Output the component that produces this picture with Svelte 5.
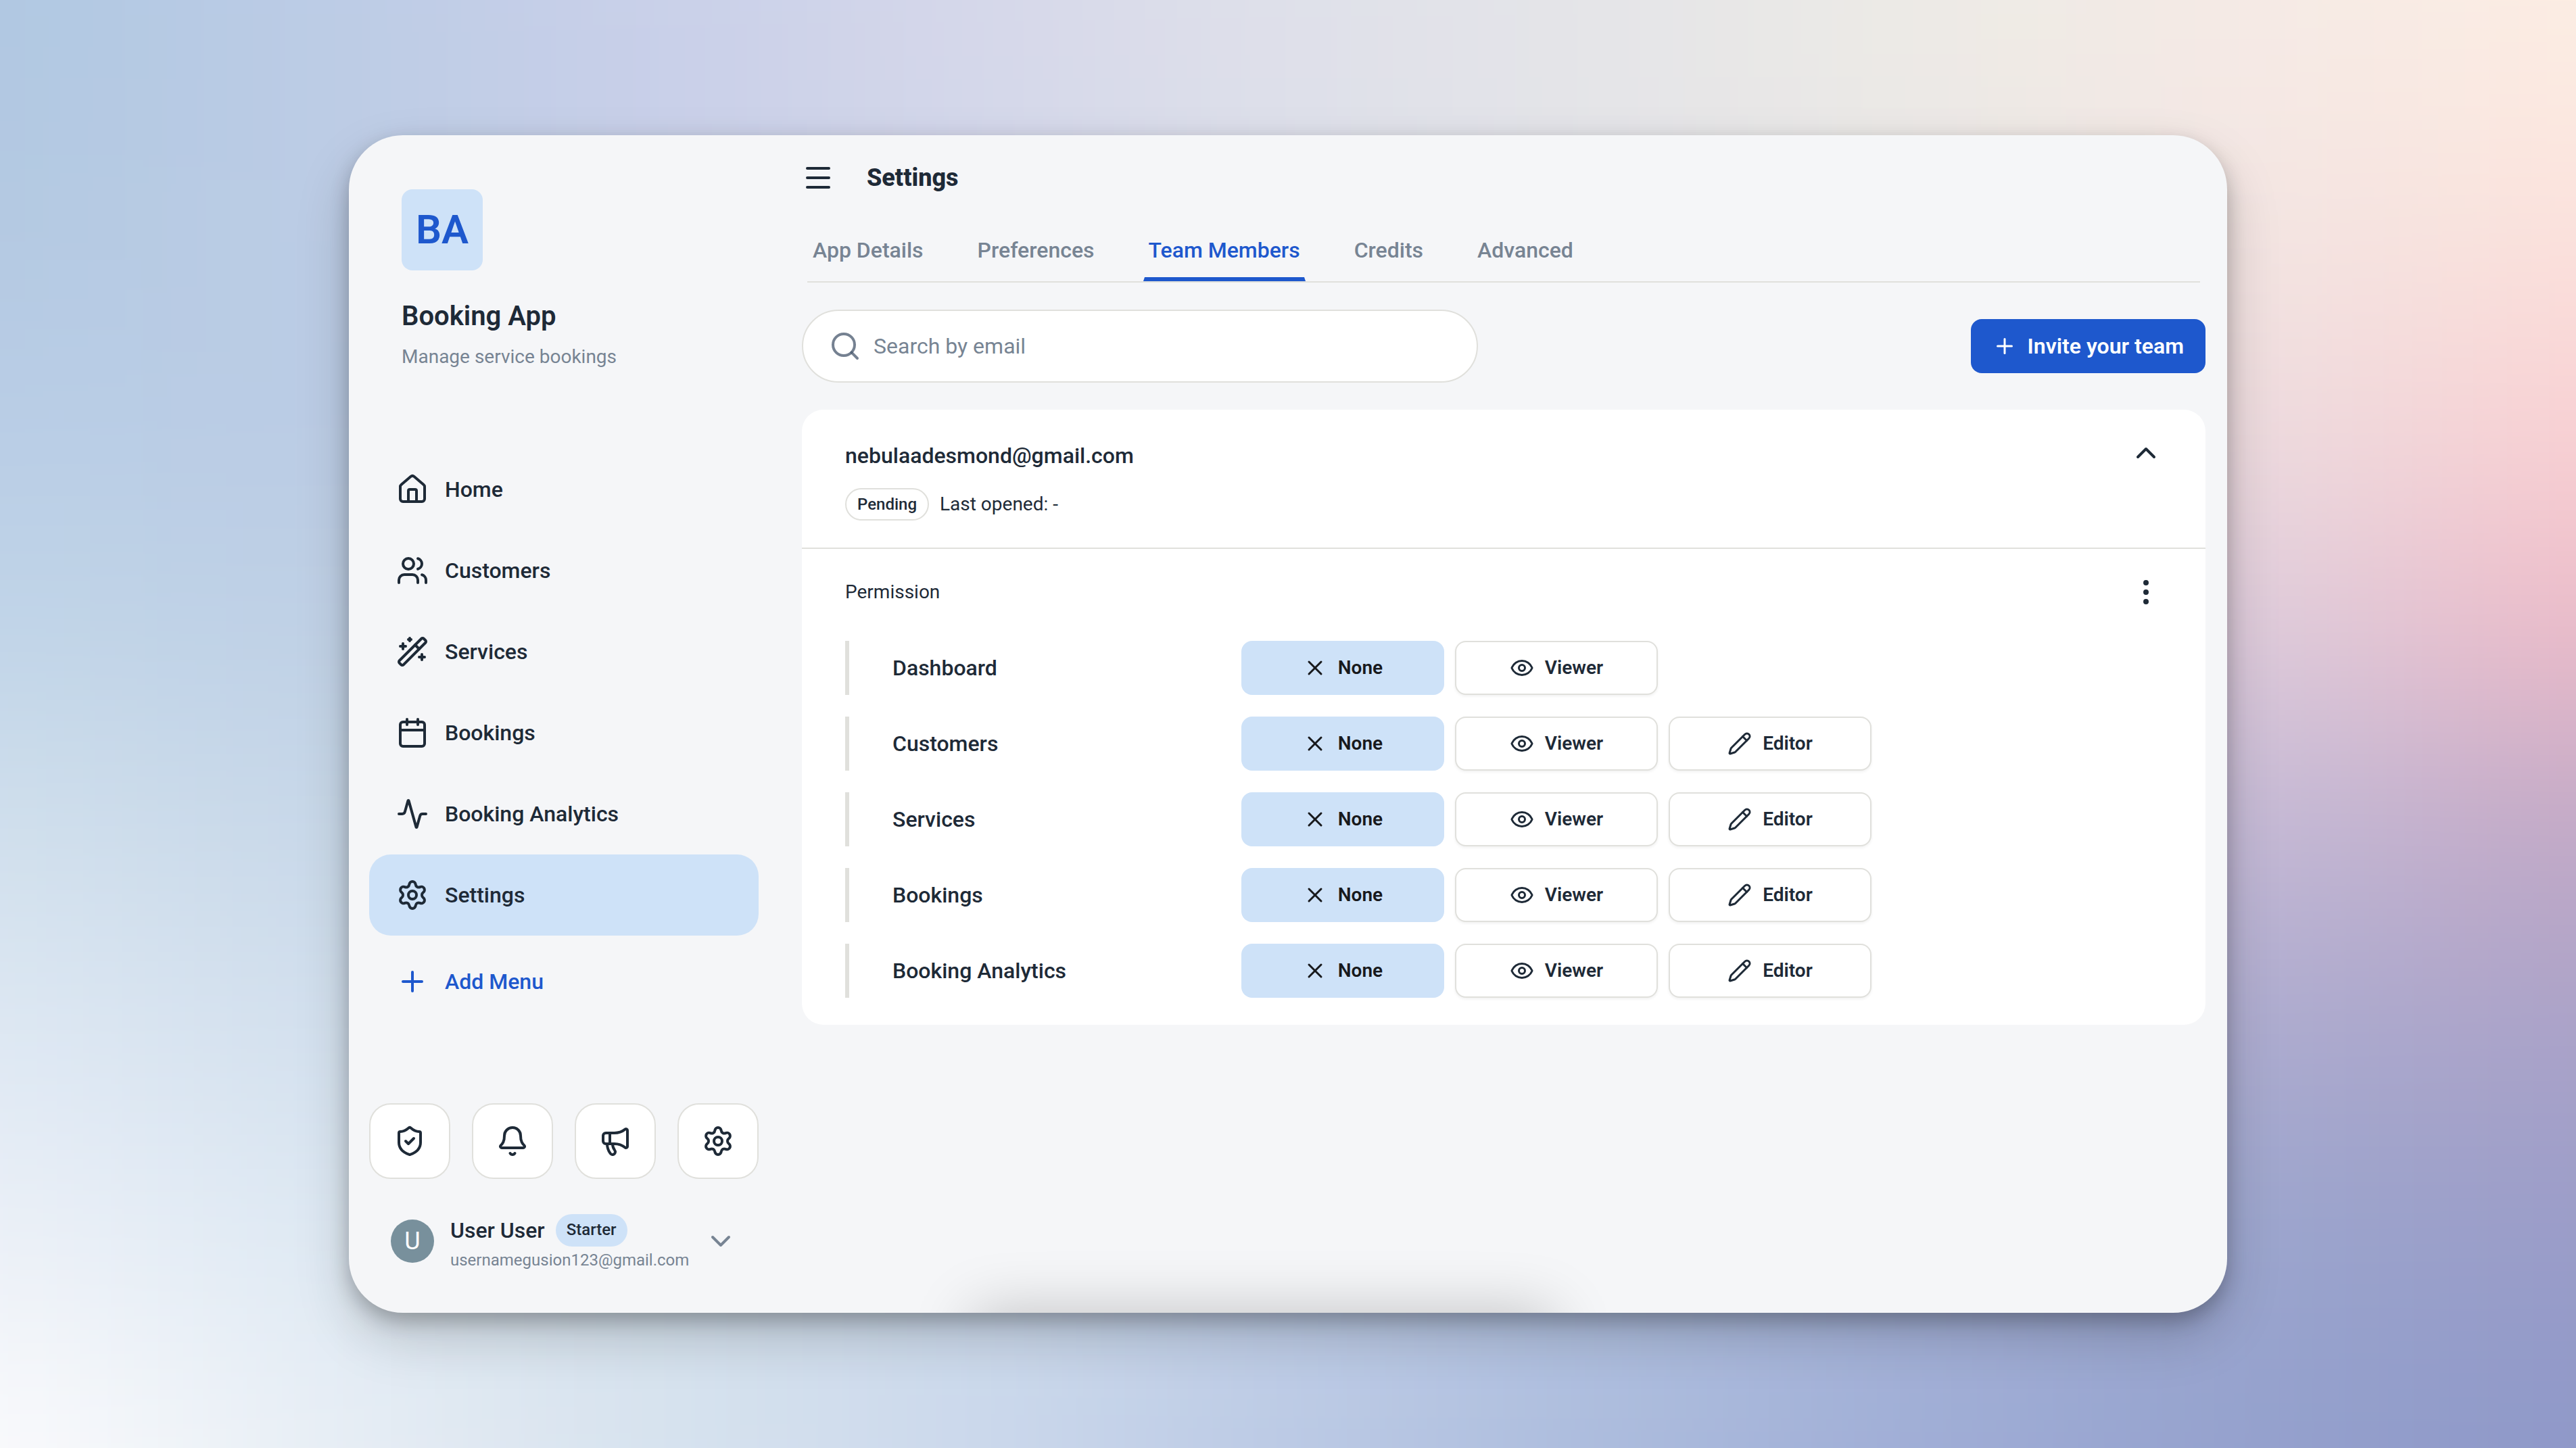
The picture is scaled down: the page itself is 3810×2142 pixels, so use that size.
<script lang="ts">
  type Level = "none" | "viewer" | "editor";

  const icons: Record<string, string[]> = {
    home: [
      "M15 21v-8a1 1 0 0 0-1-1h-4a1 1 0 0 0-1 1v8",
      "M3 10a2 2 0 0 1 .709-1.528l7-6a2 2 0 0 1 2.582 0l7 6A2 2 0 0 1 21 10v9a2 2 0 0 1-2 2H5a2 2 0 0 1-2-2z",
    ],
    users: [
      "M16 21v-2a4 4 0 0 0-4-4H6a4 4 0 0 0-4 4v2",
      "M16 3.128a4 4 0 0 1 0 7.744",
      "M22 21v-2a4 4 0 0 0-3-3.87",
      "M13 7a4 4 0 1 1-8 0 4 4 0 0 1 8 0",
    ],
    wand: [
      "m21.64 3.64-1.28-1.28a1.21 1.21 0 0 0-1.72 0L2.36 18.64a1.21 1.21 0 0 0 0 1.72l1.28 1.28a1.2 1.2 0 0 0 1.72 0L21.64 5.36a1.2 1.2 0 0 0 0-1.72",
      "m14 7 3 3",
      "M5 6v4",
      "M19 14v4",
      "M10 2v2",
      "M7 8H3",
      "M21 16h-4",
      "M11 3H9",
    ],
    calendar: [
      "M8 2v4",
      "M16 2v4",
      "M5 4h14a2 2 0 0 1 2 2v14a2 2 0 0 1-2 2H5a2 2 0 0 1-2-2V6a2 2 0 0 1 2-2z",
      "M3 10h18",
    ],
    activity: [
      "M22 12h-2.48a2 2 0 0 0-1.93 1.46l-2.35 8.36a.25.25 0 0 1-.48 0L9.24 2.18a.25.25 0 0 0-.48 0l-2.35 8.36A2 2 0 0 1 4.49 12H2",
    ],
    settings: [
      "M9.671 4.136a2.34 2.34 0 0 1 4.659 0 2.34 2.34 0 0 0 3.319 1.915 2.34 2.34 0 0 1 2.33 4.033 2.34 2.34 0 0 0 0 3.831 2.34 2.34 0 0 1-2.33 4.033 2.34 2.34 0 0 0-3.319 1.915 2.34 2.34 0 0 1-4.659 0 2.34 2.34 0 0 0-3.32-1.915 2.34 2.34 0 0 1-2.33-4.033 2.34 2.34 0 0 0 0-3.831A2.34 2.34 0 0 1 6.35 6.051a2.34 2.34 0 0 0 3.319-1.915",
      "M15 12a3 3 0 1 1-6 0 3 3 0 0 1 6 0",
    ],
    plus: ["M5 12h14", "M12 5v14"],
    shield: [
      "M20 13c0 5-3.5 7.5-7.66 8.95a1 1 0 0 1-.67-.01C7.5 20.5 4 18 4 13V6a1 1 0 0 1 1-1c2 0 4.5-1.2 6.24-2.72a1.17 1.17 0 0 1 1.52 0C14.51 3.81 17 5 19 5a1 1 0 0 1 1 1z",
      "m9 12 2 2 4-4",
    ],
    bell: [
      "M10.268 21a2 2 0 0 0 3.464 0",
      "M3.262 15.326A1 1 0 0 0 4 17h16a1 1 0 0 0 .74-1.673C19.41 13.956 18 12.499 18 8A6 6 0 0 0 6 8c0 4.499-1.411 5.956-2.738 7.326",
    ],
    megaphone: [
      "M11 6a13 13 0 0 0 8.4-2.8A1 1 0 0 1 21 4v12a1 1 0 0 1-1.6.8A13 13 0 0 0 11 14H5a2 2 0 0 1-2-2V8a2 2 0 0 1 2-2z",
      "M6 14a12 12 0 0 0 2.4 7.2 2 2 0 0 0 3.2-2.4A8 8 0 0 1 10 14",
      "M8 6v8",
    ],
    chevronDown: ["m6 9 6 6 6-6"],
    chevronUp: ["m18 15-6-6-6 6"],
    menu: ["M4 5h16", "M4 12h16", "M4 19h16"],
    search: ["M19 11a8 8 0 1 1-16 0 8 8 0 0 1 16 0", "m21 21-4.3-4.3"],
    more: [
      "M13 12a1 1 0 1 1-2 0 1 1 0 0 1 2 0",
      "M13 5a1 1 0 1 1-2 0 1 1 0 0 1 2 0",
      "M13 19a1 1 0 1 1-2 0 1 1 0 0 1 2 0",
    ],
    none: ["M18 6 6 18", "m6 6 12 12"],
    viewer: [
      "M2.062 12.348a1 1 0 0 1 0-.696 10.75 10.75 0 0 1 19.876 0 1 1 0 0 1 0 .696 10.75 10.75 0 0 1-19.876 0",
      "M15 12a3 3 0 1 1-6 0 3 3 0 0 1 6 0",
    ],
    editor: [
      "M21.174 6.812a1 1 0 0 0-3.986-3.987L3.842 16.174a2 2 0 0 0-.5.83l-1.321 4.352a.5.5 0 0 0 .623.622l4.353-1.32a2 2 0 0 0 .83-.497z",
      "m15 5 4 4",
    ],
  };

  const menu = [
    { icon: "home", label: "Home" },
    { icon: "users", label: "Customers" },
    { icon: "wand", label: "Services" },
    { icon: "calendar", label: "Bookings" },
    { icon: "activity", label: "Booking Analytics" },
    { icon: "settings", label: "Settings" },
  ];
  const shortcuts = ["shield", "bell", "megaphone", "settings"];
  const tabs = ["App Details", "Preferences", "Team Members", "Credits", "Advanced"];
  const levelLabels: Record<Level, string> = { none: "None", viewer: "Viewer", editor: "Editor" };

  let activePage = $state("Settings");
  let activeTab = $state("Team Members");
  let permissions = $state<{ name: string; levels: Level[]; selected: Level }[]>([
    { name: "Dashboard", levels: ["none", "viewer"], selected: "none" },
    { name: "Customers", levels: ["none", "viewer", "editor"], selected: "none" },
    { name: "Services", levels: ["none", "viewer", "editor"], selected: "none" },
    { name: "Bookings", levels: ["none", "viewer", "editor"], selected: "none" },
    { name: "Booking Analytics", levels: ["none", "viewer", "editor"], selected: "none" },
  ]);

  // Wallpaper: a coarse grid of colors, blurred into one soft mesh
  const mesh = [
    "b0c8e2 bccce6 c9d0ea d6d8ea e0e1ea e6e6e8 eeece6 f6ebe6 fdeee4",
    "b3c9e2 bccde5 c8cfe8 d2d6ea dde0ea e4e4e8 ebe8e6 f4e6e3 fce4dd",
    "b9cde6 bacce5 c5cfe7 ccd4e8 d6dae6 dcdce6 e4dce2 efdddf fad2d4",
    "c0d5e8 bfd0e6 c5d2e8 ccd6e8 d0d6e6 d4d2e2 d8cce0 dfcddc eebbc8",
    "d1e0ed c8d8e9 c8d8ea cad8e8 c8d4e6 c4cae0 c2bedb c4bad6 c2a8c6",
    "dfe9f4 d3e0ee d0dfee cedbeb c6d3e8 bcc8e2 b4b8da acabcf aaa2c8",
    "edf1f8 dfeaf4 d5e3ee cedcec c0cfe8 b0c0e0 a6b2d8 9aa5cd 9a9cc8",
    "fcfcfd e9eff6 d8e3ef ccd9ec bccae5 acbcdd 9fadd6 94a1cd 8e98c8",
  ].map((row) => row.split(" ").map((c) => "#" + c));
  const CELL_W = 3810 / 8;
  const CELL_H = 2142 / 7;
</script>

{#snippet icon(name: string)}
  <svg class="icon" viewBox="0 0 24 24" aria-hidden="true">
    {#each icons[name] as d}
      <path {d} />
    {/each}
  </svg>
{/snippet}

<div class="desktop">
  <svg class="wallpaper" viewBox="0 0 3810 2142" aria-hidden="true">
    <defs>
      <filter id="soften" filterUnits="userSpaceOnUse" x="-600" y="-600" width="5010" height="3342" color-interpolation-filters="sRGB">
        <feGaussianBlur stdDeviation="190 130" />
      </filter>
    </defs>
    <g filter="url(#soften)">
      {#each mesh as row, r}
        {#each row as color, c}
          {@const left = c === 0 ? -800 : (c - 0.5) * CELL_W}
          {@const right = c === 8 ? 4700 : (c + 0.5) * CELL_W + 1}
          {@const top = r === 0 ? -800 : (r - 0.5) * CELL_H}
          {@const bottom = r === 7 ? 3000 : (r + 0.5) * CELL_H + 1}
          <rect x={left} y={top} width={right - left} height={bottom - top} fill={color} />
        {/each}
      {/each}
    </g>
  </svg>

  <div class="window">
    <aside class="sidebar">
      <header class="brand">
        <div class="logo">BA</div>
        <h1>Booking App</h1>
        <p>Manage service bookings</p>
      </header>

      <nav class="menu">
        {#each menu as item}
          <button
            class="menu-item"
            class:active={item.label === activePage}
            onclick={() => (activePage = item.label)}
          >
            {@render icon(item.icon)}
            <span>{item.label}</span>
          </button>
        {/each}
        <button class="menu-item add">
          {@render icon("plus")}
          <span>Add Menu</span>
        </button>
      </nav>

      <div class="shortcuts">
        {#each shortcuts as name}
          <button class="shortcut" aria-label={name}>{@render icon(name)}</button>
        {/each}
      </div>

      <div class="account">
        <div class="avatar">U</div>
        <div class="account-text">
          <div class="account-name">
            <span>User User</span>
            <span class="plan">Starter</span>
          </div>
          <div class="account-email">usernamegusion123@gmail.com</div>
        </div>
        {@render icon("chevronDown")}
      </div>
    </aside>

    <main>
      <header class="topbar">
        {@render icon("menu")}
        <h2>Settings</h2>
      </header>

      <div class="tabs">
        {#each tabs as tab}
          <button class="tab" class:active={tab === activeTab} onclick={() => (activeTab = tab)}>{tab}</button>
        {/each}
      </div>

      <div class="toolbar">
        <label class="search">
          {@render icon("search")}
          <input type="text" placeholder="Search by email" />
        </label>
        <button class="invite">
          {@render icon("plus")}
          <span>Invite your team</span>
        </button>
      </div>

      <section class="card">
        <div class="member">
          <div>
            <div class="member-email">nebulaadesmond@gmail.com</div>
            <div class="member-meta">
              <span class="status">Pending</span>
              <span class="last-opened">Last opened: -</span>
            </div>
          </div>
          {@render icon("chevronUp")}
        </div>

        <div class="permissions">
          <div class="permissions-head">
            <span>Permission</span>
            {@render icon("more")}
          </div>
          {#each permissions as permission}
            <div class="permission">
              <div class="permission-name">{permission.name}</div>
              {#each permission.levels as level}
                <button
                  class="level"
                  class:selected={permission.selected === level}
                  onclick={() => (permission.selected = level)}
                >
                  {@render icon(level)}
                  <span>{levelLabels[level]}</span>
                </button>
              {/each}
            </div>
          {/each}
        </div>
      </section>
    </main>

    <div class="sheet-shadow"></div>
  </div>
</div>

<style>
  :global(body) {
    margin: 0;
  }

  .desktop {
    position: relative;
    box-sizing: border-box;
    width: 3810px;
    height: 2142px;
    padding: 200px 516px;
    overflow: hidden;
    font-family: Roboto, "Liberation Sans", sans-serif;
    font-size: 32px;
    color: #1e2a37;
  }

  .desktop * {
    box-sizing: border-box;
  }

  .wallpaper {
    position: absolute;
    inset: 0;
    width: 100%;
    height: 100%;
  }

  .window {
    position: relative;
    display: flex;
    width: 2778px;
    height: 1742px;
    border-radius: 80px;
    background: #f5f6f8;
    overflow: hidden;
    box-shadow:
      0 12px 28px rgba(0, 0, 0, 0.23),
      0 36px 80px rgba(0, 0, 0, 0.18);
  }

  .sheet-shadow {
    position: absolute;
    left: 924px;
    top: 100%;
    width: 856px;
    height: 100px;
    box-shadow: 0 0 90px rgba(0, 0, 0, 0.22);
  }

  button {
    border: 0;
    padding: 0;
    background: none;
    font: inherit;
    color: inherit;
  }

  .icon {
    flex: none;
    width: 48px;
    height: 48px;
    fill: none;
    stroke: currentColor;
    stroke-width: 2;
    stroke-linecap: round;
    stroke-linejoin: round;
  }

  .sidebar {
    display: flex;
    flex-direction: column;
    width: 638px;
    padding: 80px 32px 58px 30px;
  }

  .brand {
    height: 384px;
    padding-left: 48px;
  }

  .logo {
    display: flex;
    align-items: center;
    justify-content: center;
    width: 120px;
    height: 120px;
    padding-bottom: 2px;
    border-radius: 16px;
    background: #cee2f8;
    color: #1e58cd;
    font-size: 60px;
    font-weight: 600;
  }

  h1 {
    margin: 40px 0 0;
    font-size: 40px;
    font-weight: 600;
    line-height: 56px;
  }

  .brand p {
    margin: 12px 0 0;
    font-size: 28px;
    line-height: 40px;
    color: #778493;
  }

  .menu-item {
    display: flex;
    align-items: center;
    gap: 24px;
    width: 576px;
    height: 120px;
    padding: 0 40px;
    border-radius: 32px;
    font-weight: 500;
    text-align: left;
  }

  .menu-item.active {
    background: #cee2f8;
  }

  .menu-item.add {
    margin-top: 8px;
    color: #1e58cd;
  }

  .shortcuts {
    display: flex;
    gap: 32px;
    margin-top: auto;
  }

  .shortcut {
    display: flex;
    align-items: center;
    justify-content: center;
    width: 120px;
    height: 112px;
    border: 2px solid #e0e0dc;
    border-radius: 32px;
    background: #fff;
  }

  .account {
    display: flex;
    align-items: center;
    height: 96px;
    margin-top: 44px;
    padding: 0 32px;
  }

  .account > .icon {
    margin-left: auto;
    color: #778493;
  }

  .avatar {
    display: flex;
    align-items: center;
    justify-content: center;
    width: 64px;
    height: 64px;
    margin-right: 24px;
    border-radius: 50%;
    background: #78909c;
    color: #fff;
    font-size: 36px;
  }

  .account-text {
    padding-top: 4px;
  }

  .account-name {
    display: flex;
    align-items: center;
    gap: 16px;
    height: 48px;
    font-weight: 500;
  }

  .plan {
    height: 48px;
    padding: 0 16px;
    border-radius: 24px;
    background: #cee2f8;
    font-size: 24px;
    line-height: 47px;
  }

  .account-email {
    margin-top: 4px;
    font-size: 24px;
    line-height: 32px;
    color: #778493;
  }

  main {
    flex: 1;
    padding: 23px 32px 0;
  }

  .topbar {
    display: flex;
    align-items: center;
    gap: 48px;
    height: 80px;
  }

  h2 {
    margin: 0;
    font-size: 36px;
    font-weight: 800;
  }

  .tabs {
    display: flex;
    gap: 64px;
    height: 92px;
    margin: 23px 8px 0;
    border-bottom: 2px solid #e0e0dc;
  }

  .tab {
    height: 90px;
    padding: 3px 6px 0;
    border: solid transparent;
    border-width: 0 2px 6px;
    border-radius: 4px 4px 0 0;
    font-weight: 500;
    color: #778493;
  }

  .tab.active {
    border-bottom-color: #1e58cd;
    color: #1e58cd;
  }

  .toolbar {
    display: flex;
    align-items: center;
    justify-content: space-between;
    margin-top: 40px;
  }

  .search {
    display: flex;
    align-items: center;
    gap: 18px;
    width: 1000px;
    height: 108px;
    padding: 0 38px;
    border: 2px solid #e0e0dc;
    border-radius: 54px;
    background: #fff;
  }

  .search .icon {
    stroke: rgba(74, 90, 110, 0.76);
  }

  .search input {
    flex: 1;
    border: 0;
    padding: 0;
    outline: 0;
    background: none;
    font: inherit;
  }

  .search input::placeholder {
    color: #778493;
  }

  .invite {
    display: flex;
    align-items: center;
    gap: 16px;
    height: 80px;
    padding: 0 32px;
    border-radius: 16px;
    background: #1e58cd;
    color: #fff;
    font-weight: 600;
  }

  .invite .icon,
  .level .icon {
    width: 36px;
    height: 36px;
  }

  .card {
    height: 910px;
    margin-top: 40px;
    border-radius: 32px;
    background: #fff;
  }

  .member {
    display: flex;
    justify-content: space-between;
    height: 206px;
    padding: 40px 64px 0;
    border-bottom: 2px solid #e0e0dc;
  }

  .member-email {
    font-weight: 500;
    line-height: 56px;
  }

  .member-meta {
    display: flex;
    align-items: center;
    gap: 16px;
    margin-top: 20px;
    font-size: 28px;
  }

  .status {
    height: 48px;
    padding: 0 16px;
    border: 2px solid #e0e0dc;
    border-radius: 24px;
    font-size: 24px;
    font-weight: 500;
    line-height: 44px;
  }

  .last-opened {
    padding-bottom: 2px;
  }

  .permissions {
    padding: 40px 64px 0;
  }

  .permissions-head {
    display: flex;
    align-items: center;
    justify-content: space-between;
    margin-bottom: 48px;
    font-size: 28px;
  }

  .permissions-head span {
    padding-bottom: 2px;
  }

  .permission {
    display: flex;
    gap: 16px;
    height: 80px;
    margin-bottom: 32px;
    border-left: 6px solid #e0e0dc;
  }

  .permission-name {
    width: 564px;
    padding-left: 64px;
    font-weight: 500;
    line-height: 80px;
  }

  .level {
    display: flex;
    align-items: center;
    justify-content: center;
    gap: 16px;
    width: 300px;
    padding-bottom: 1px;
    border: 2px solid #e0e0dc;
    border-radius: 16px;
    background: #fff;
    box-shadow: 0 2px 4px rgba(0, 0, 0, 0.06);
    font-size: 28px;
    font-weight: 600;
  }

  .level.selected {
    border-color: transparent;
    background: #cee2f8;
    background-clip: border-box;
    box-shadow: none;
    color: #18191c;
  }
</style>
